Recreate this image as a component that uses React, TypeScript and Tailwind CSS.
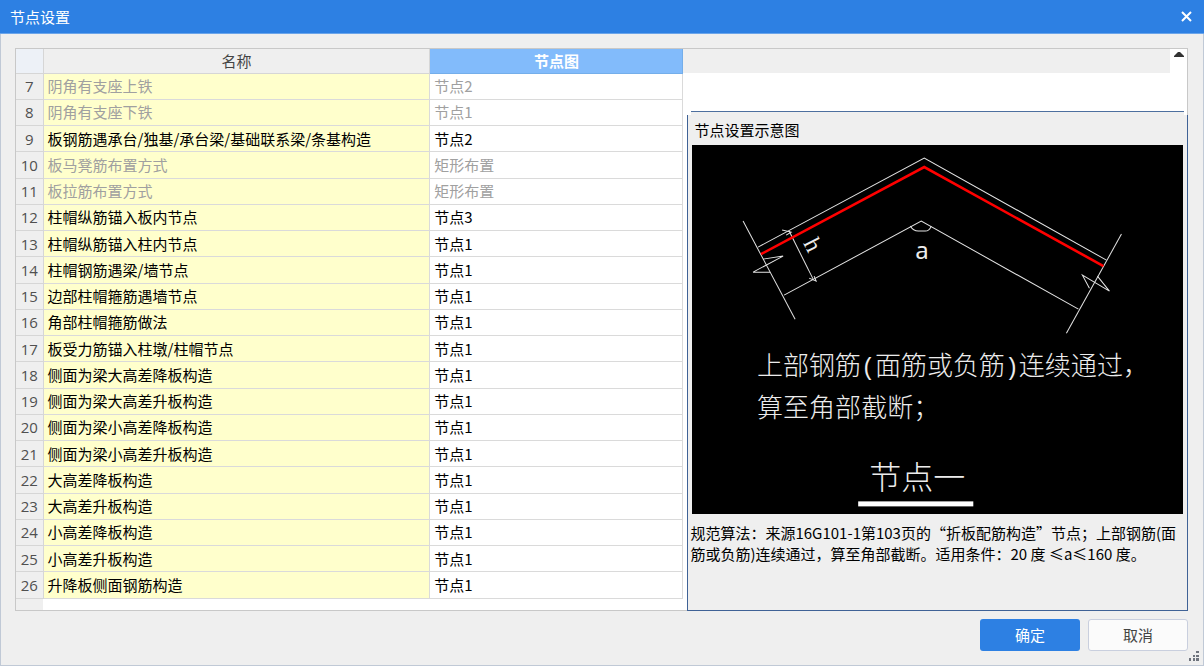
import { useState } from "react";

interface NodeRow {
  id: number;
  name: string;
  node: string;
  disabled?: boolean;
}

const rows: NodeRow[] = [
  { id: 7, name: "阴角有支座上铁", node: "节点2", disabled: true },
  { id: 8, name: "阴角有支座下铁", node: "节点1", disabled: true },
  { id: 9, name: "板钢筋遇承台/独基/承台梁/基础联系梁/条基构造", node: "节点2" },
  { id: 10, name: "板马凳筋布置方式", node: "矩形布置", disabled: true },
  { id: 11, name: "板拉筋布置方式", node: "矩形布置", disabled: true },
  { id: 12, name: "柱帽纵筋锚入板内节点", node: "节点3" },
  { id: 13, name: "柱帽纵筋锚入柱内节点", node: "节点1" },
  { id: 14, name: "柱帽钢筋遇梁/墙节点", node: "节点1" },
  { id: 15, name: "边部柱帽箍筋遇墙节点", node: "节点1" },
  { id: 16, name: "角部柱帽箍筋做法", node: "节点1" },
  { id: 17, name: "板受力筋锚入柱墩/柱帽节点", node: "节点1" },
  { id: 18, name: "侧面为梁大高差降板构造", node: "节点1" },
  { id: 19, name: "侧面为梁大高差升板构造", node: "节点1" },
  { id: 20, name: "侧面为梁小高差降板构造", node: "节点1" },
  { id: 21, name: "侧面为梁小高差升板构造", node: "节点1" },
  { id: 22, name: "大高差降板构造", node: "节点1" },
  { id: 23, name: "大高差升板构造", node: "节点1" },
  { id: 24, name: "小高差降板构造", node: "节点1" },
  { id: 25, name: "小高差升板构造", node: "节点1" },
  { id: 26, name: "升降板侧面钢筋构造", node: "节点1" },
];

const NodeTable = () => (
  <table className="h-full w-full table-fixed border-collapse text-[15px] leading-5">
    <colgroup>
      <col className="w-[27px]" />
      <col className="w-[58%]" />
      <col />
    </colgroup>
    <thead>
      <tr className="h-6">
        <th className="border-r border-b border-[#d6d6d6] bg-[#edf1f7] p-0" aria-label="序号"></th>
        <th className="border-r border-b border-[#d6d6d6] bg-[#efefef] p-0 font-normal text-[#444444]">
          名称
        </th>
        <th className="border border-t-0 border-[#74aeea] bg-[#82bbfb] p-0 font-bold text-white">
          节点图
        </th>
      </tr>
    </thead>
    <tbody>
      {rows.map((row) => (
        <tr key={row.id} className={row.disabled ? "text-[#a0a0a0]" : "text-black"}>
          <th
            scope="row"
            className="border-r border-b border-[#d6d6d6] bg-[#efefef] p-0 text-center font-['Open_Sans','Noto_Sans_CJK_SC',sans-serif] font-normal text-[#505050]"
          >
            {row.id}
          </th>
          <td className="border-r border-b border-[#dadada] bg-[#ffffcc] px-1 py-0 whitespace-nowrap">
            {row.name}
          </td>
          <td className="border-r border-b border-[#dadada] bg-white px-1 py-0 whitespace-nowrap">
            {row.node}
          </td>
        </tr>
      ))}
      <tr className="h-3">
        <td className="bg-[#efefef] p-0"></td>
        <td className="p-0" colSpan={2}></td>
      </tr>
    </tbody>
  </table>
);

const NodeDiagram = () => (
  <svg
    viewBox="0 0 490 369"
    className="block h-auto w-full bg-black"
    role="img"
    aria-label="节点一"
    fill="none"
  >
    <g stroke="#e4e4e4" strokeWidth="1">
      {/* slab outline */}
      <path d="M66 102 L232 13 L414 115" />
      <path d="M92 150 L229 76 L386 164" />
      {/* break lines */}
      <path d="M51 76 L103 174" />
      <path d="M71 114 L91 111 L61 127 L78 127" />
      <path d="M429 89 L374 188" />
      <path d="M397 143 L390 130 L417 146 L405 131" />
      {/* thickness h */}
      <path d="M97 86 L121 134" />
      <path d="M90 85 L99 87 L94 90 M117 133 L124 136 L122 131" />
      {/* angle a */}
      <path d="M218 81 Q221 86 226 86 L233 86 Q237 86 239 81" />
    </g>
    <path d="M69 109 L232 22 L411 121" stroke="#ff0000" strokeWidth="2.6" />
    <g fill="#ececec" className="font-['Noto_Sans_CJK_SC',sans-serif]">
      <text x="223" y="114" fontSize="24" className="font-['Noto_Sans',sans-serif]">
        a
      </text>
      <text
        transform="translate(111 98) rotate(63)"
        fontSize="24"
        className="font-['Liberation_Serif',serif]"
      >
        h
      </text>
      <text x="65" y="230" fontSize="26" fontWeight="300">
        上部钢筋
        <tspan fontSize="23" className="font-['Liberation_Mono',monospace]">(</tspan>
        面筋或负筋
        <tspan fontSize="23" className="font-['Liberation_Mono',monospace]">)</tspan>
        连续通过，
      </text>
      <text x="65" y="272" fontSize="26" fontWeight="300">
        算至角部截断；
      </text>
      <text x="177" y="344" fontSize="32" fontWeight="300">
        节点一
      </text>
    </g>
    <rect x="166" y="356" width="115" height="5" fill="#ffffff" />
  </svg>
);

const PreviewPanel = () => (
  <section className="-mr-px -mb-px ml-1 flex flex-1 flex-col">
    <div className="mx-1 h-1 border-t border-[#4d6f9f] bg-[#efefef]"></div>
    <div className="flex-1 border-x border-b border-[#3f6296] bg-[#efefef]">
      <h2 className="px-1.5 pt-1 pb-[5px] text-[15px] leading-[21px] text-black">节点设置示意图</h2>
      <div className="px-1">
        <NodeDiagram />
      </div>
      <p className="px-0.5 pt-2 text-[15px] leading-[21px] text-black">
        规范算法：来源16G101-1第103页的“折板配筋构造”节点；上部钢筋(面筋或负筋)连续通过，算至角部截断。适用条件：20
        度 ≤a≤160 度。
      </p>
    </div>
  </section>
);

const App = () => {
  const [open, setOpen] = useState(true);

  if (!open) return null;

  return (
    <div className="relative flex min-h-screen flex-col bg-[#efefef] font-['Noto_Sans_CJK_SC',sans-serif]">
      <header className="flex h-[34px] items-center justify-between border-b border-[#6ba5ea] bg-[#2d80e3] px-2.5 text-white">
        <h1 className="text-[15px] leading-5">节点设置</h1>
        <button type="button" aria-label="关闭" onClick={() => setOpen(false)} className="p-0.5">
          <svg width="11" height="11" viewBox="0 0 11 11" stroke="currentColor" strokeWidth="2">
            <path d="M1 1 L10 10 M10 1 L1 10" />
          </svg>
        </button>
      </header>

      <main className="flex flex-1 flex-col border-x border-b border-[#c0c9d6] pt-3.5 pr-[15px] pb-3.5 pl-3.5">
        <div className="flex flex-1 border border-[#c8c8c8] bg-white">
          <div className="w-[57%]">
            <NodeTable />
          </div>
          <div className="flex min-w-0 flex-1 flex-col">
            <div className="flex h-[62px] items-start">
              <div className="h-6 flex-1 bg-[#efefef]"></div>
              <button type="button" aria-label="向上滚动" className="flex w-[17px] justify-center pt-[3px]">
                <svg width="10" height="5" viewBox="0 0 10 5" fill="#333333">
                  <path d="M4 0 H6 L10 4 V5 H0 V4 Z" />
                </svg>
              </button>
            </div>
            <PreviewPanel />
          </div>
        </div>

        <footer className="flex justify-end gap-2 pt-2">
          <button
            type="button"
            className="h-8 w-[100px] rounded-[3px] bg-[#2d80e3] text-[15px] leading-5 text-white"
          >
            确定
          </button>
          <button
            type="button"
            onClick={() => setOpen(false)}
            className="h-8 w-[100px] rounded-[3px] border border-[#c9cfde] bg-[#fbfbfb] text-[15px] leading-5 text-[#444444]"
          >
            取消
          </button>
        </footer>
      </main>

      {/* resize grip */}
      <svg
        width="10"
        height="10"
        viewBox="0 0 10 10"
        fill="#6f747d"
        className="absolute right-[5px] bottom-[5px]"
      >
        <path d="M7 0h3v2h-3z M4 4h2v2h-2z M7 4h3v2h-3z M0 7h2v3h-2z M4 7h2v3h-2z M7 7h3v3h-3z" />
      </svg>
    </div>
  );
};

export default App;
